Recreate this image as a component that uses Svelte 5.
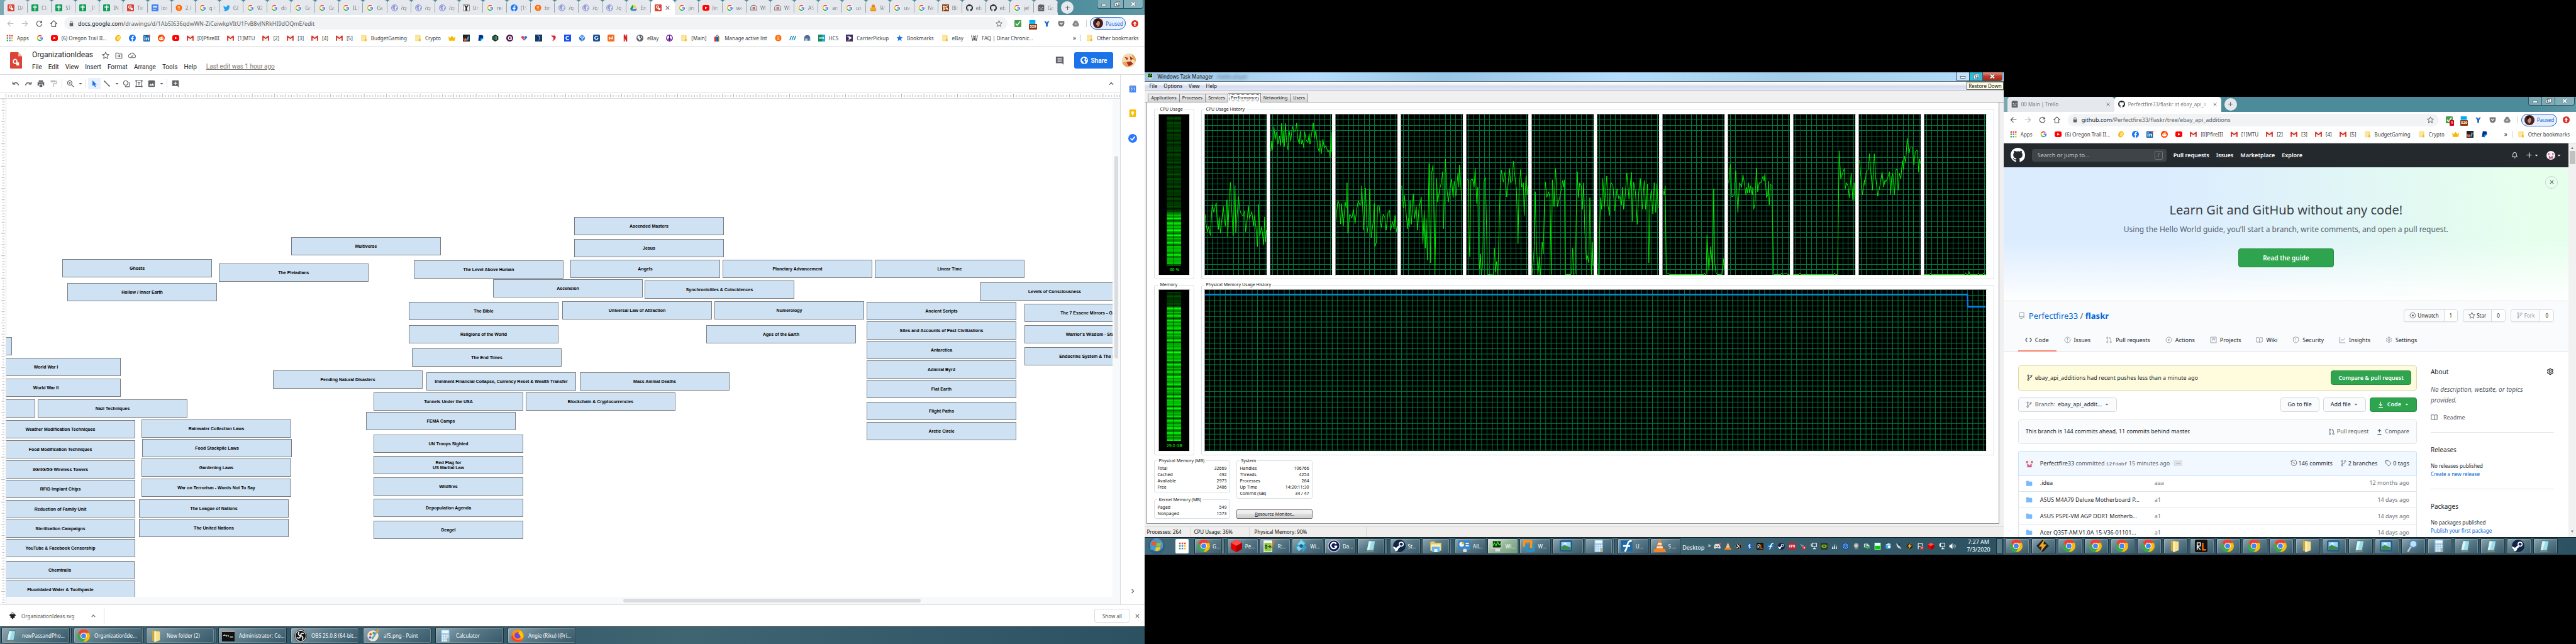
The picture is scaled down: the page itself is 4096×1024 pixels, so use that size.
<script>
  const C = (f, d) => `<path fill="${f}" d="${d}"/>`;
  const S = (s, d, w = 1.4) => `<path fill="none" stroke="${s}" stroke-width="${w}" stroke-linejoin="round" d="${d}"/>`;
  const O = (f, r = 8, x = 8, y = 8) => `<circle fill="${f}" cx="${x}" cy="${y}" r="${r}"/>`;
  const R = (f, x, y, w, h, r = 0) => `<rect fill="${f}" x="${x}" y="${y}" width="${w}" height="${h}" rx="${r}"/>`;
  const g = '#5f6368';
  const cat = 'M8 0C3.58 0 0 3.58 0 8c0 3.54 2.29 6.53 5.47 7.59.4.07.55-.17.55-.38 0-.19-.01-.82-.01-1.49-2.01.37-2.53-.49-2.69-.94-.09-.23-.48-.94-.82-1.13-.28-.15-.68-.52-.01-.53.63-.01 1.08.58 1.23.82.72 1.21 1.87.87 2.33.66.07-.52.28-.87.51-1.07-1.78-.2-3.64-.89-3.64-3.95 0-.87.31-1.59.82-2.15-.08-.2-.36-1.02.08-2.12 0 0 .67-.21 2.2.82.64-.18 1.32-.27 2-.27.68 0 1.36.09 2 .27 1.53-1.04 2.2-.82 2.2-.82.44 1.1.16 1.92.08 2.12.51.56.82 1.27.82 2.15 0 3.07-1.87 3.75-3.65 3.95.29.25.54.73.54 1.48 0 1.07-.01 1.93-.01 2.2 0 .21.15.46.55.38A8.013 8.013 0 0016 8c0-4.42-3.58-8-8-8z';
  const star = 'M8 1l2.1 4.8 5 .5-3.8 3.4 1.1 5.1L8 12.1l-4.4 2.7 1.1-5.1L.9 6.3l5-.5z';
  const branch = (c) => S(c, 'M4.5 5v6M4.5 11c0-3 7-1.500 7-5.500', 1.3) + `<g fill="none" stroke="${c}" stroke-width="1.3"><circle cx="4.500" cy="3.200" r="1.700"/><circle cx="4.500" cy="12.800" r="1.700"/><circle cx="11.500" cy="3.800" r="1.700"/></g>`;
  const pull = (c) => S(c, 'M4 5v6M12 11V6c0-1.500-1-2.500-3-2.500M10.500 1.500l-2 2 2 2', 1.3) + `<g fill="none" stroke="${c}" stroke-width="1.3"><circle cx="4" cy="3.200" r="1.700"/><circle cx="4" cy="12.800" r="1.700"/><circle cx="12" cy="12.800" r="1.700"/></g>`;
  const book = (c) => S(c, 'M8 4v10M1.200 2.500h4.500C7 2.500 8 3.200 8 4.200c0-1 1-1.700 2.300-1.700h4.500v10.500h-4.300C9 13 8 13.500 8 14.300c0-.8-1-1.300-2.500-1.300H1.200z');
  const gear = (c) => S(c, 'M6.800 1.200h2.400l.4 2 1.400.8 1.900-.7 1.200 2-1.500 1.400v1.600l1.500 1.400-1.200 2-1.900-.7-1.400.8-.4 2H6.800l-.4-2-1.400-.8-1.900.7-1.200-2 1.500-1.400V6.700L1.900 5.300l1.200-2 1.900.7 1.400-.8z') + `<circle cx="8" cy="7.500" r="2.200" fill="none" stroke="${c}" stroke-width="1.400"/>`;
  const gmail = R('#eee', 0, 2, 16, 12, 1) + S('#d93025', 'M1.500 14V3.500L8 9l6.500-5.500V14', 2.6);
  const steam = O('#10254a') + O('#fff', 3.2, 10.5, 5.8) + O('#10254a', 1.9, 10.5, 5.8) + C('#fff', 'M0 8.500l4 1.800 3.500-3 2 1.800-3 2.600a2.300 2.300 0 1 1-4.500.4L.4 10.700z');
  const notepad = C('#5a7f96', 'M5 1h9l-2.500 13.500H2z') + C('#9adfe6', 'M5.200 2h7.800l-2.200 11.300H3z') + C('#d8f4f4', 'M5.200 2H9L5.500 13.300H3z') + C('#a08a50', 'M2 14.500h9.500l.3 1H3z');
  const calc = R('#7db6dd', 2.5, 0, 11, 16, 1) + R('#eaf5fc', 3.5, 1, 9, 4) + [0, 1, 2, 3].map((r) => [0, 1, 2, 3].map((c) => R(c == 3 && r > 1 ? '#e8a33a' : '#fff', 3.7 + c * 2.3, 6.3 + r * 2.4, 1.7, 1.6)).join('')).join('');
  const chrome = O('#fbbc05') + C('#ea4335', 'M1.070 4A8 8 0 0 1 14.930 4L8 4.500 4.800 9.500z') + C('#34a853', 'M1.070 4A8 8 0 0 0 7.500 16L11.500 9.800 8 11.500 4.500 10z') + O('#fff', 4) + O('#4285f4', 3.1);
  const folderBig = C('#c9a73f', 'M3 1l6 1v14l-6-2z') + C('#f7e08a', 'M6 2l7 .5v11L6 16z') + C('#fdf3bd', 'M6 2l2 .1v13L6 16z');
  const picture = R('#1f5a8c', 0, 1, 16, 14, 2) + R('#9bd0f5', 2, 3, 12, 10) + C('#3f8a4b', 'M2 13V9l4-2 8 3v3z') + C('#fff', 'M4 6l3-2 3 2z');
  const vlc = C('#f58220', 'M1 12h14l1 4H0z') + C('#f58220', 'M7 0h2l4 13H3z') + C('#eee', 'M6 4h4l.8 2.500H5.200zM4.600 8.500h6.800l.7 2.300H3.900z');
  const blue = '#4285f4';
  const icons = {
    google: O('#fff') + `<g fill="none" stroke-width="2.600"><path stroke="#ea4335" d="M3.200 4.800A5.600 5.600 0 0 1 12 4"/><path stroke="#fbbc05" d="M3.200 11.200A5.600 5.600 0 0 1 3.200 4.700"/><path stroke="#34a853" d="M12 12A5.600 5.600 0 0 1 3.100 11"/><path stroke="#4285f4" d="M8 8h5.600a5.600 5.600 0 0 1-1.700 4.100"/></g>`,
    draw: R('#db4437', 0, 0, 16, 16, 2) + `<circle cx="6.500" cy="6" r="2.800" fill="none" stroke="#fff" stroke-width="1.800"/>` + R('#fff', 8.5, 8.5, 4.5, 4.5),
    sheet: R('#0f9d58', 0, 0, 16, 16, 2) + R('#fff', 7, 2, 2.2, 12) + R('#fff', 3, 5, 10, 2.2),
    doc: R(blue, 0, 0, 16, 16, 2) + R('#fff', 3, 4, 10, 1.6) + R('#fff', 3, 7.2, 10, 1.6) + R('#fff', 3, 10.400, 7, 1.6),
    badge: C('#f60', 'M8 0l1.800 1.800L12 .8l.9 2.300 2.300.9-.8 2.200L16 8l-1.600 1.800.8 2.200-2.300.9-.9 2.300-2.200-1L8 16l-1.800-1.800-2.200 1-.9-2.300L.8 12l.8-2.200L0 8l1.600-1.800L.8 4l2.300-.9L4 .8l2.200 1z') + R('#fff', 5, 5, 6, 1.3) + R('#fff', 5, 7.4, 5, 1.3) + R('#fff', 5, 9.8, 6, 1.3),
    twitter: C('#1da1f2', 'M16 3.500l-1.700.6A3.300 3.300 0 0 0 8 6.200C5 6.200 2.700 4.700 1 2.800c-.9 1.600-.3 3.500 1 4.400L.6 6.900c0 1.600 1.100 2.900 2.600 3.200H1.800c.4 1.300 1.600 2.200 3 2.300C3.500 13.500 1.800 14 .2 13.800c5 3.200 14 1 14.100-8.400z'),
    globe: O('#e8eaf6') + `<g fill="none" stroke="#5c6bc0" stroke-width="1.300"><circle cx="8" cy="8" r="7"/></g>` + C('#8f99cf', 'M4 3l4-1 2 3-3 3 2 2-1 4-3-3-2-4zM11 8l3 0-1 4z'),
    globeDark: O('#5f6368') + C('#fff', 'M4 2l4 1-1 3 3 3-2 5-3-4-3-3zM10 3l3 2v3l-2-1z'),
    crest: R('#fff', 0, 0, 16, 16, 1) + S('#333', 'M1 1h14v14H1z', 1) + C('#222', 'M3 2h3l2 3 2-3h3l-3.500 6 1 6h-5l1-6z'),
    facebook: O('#1877f2') + C('#fff', 'M9 16v-6h2l.4-2.500H9V6c0-.8.400-1.300 1.500-1.300h1V2.500C8.500 2 6.700 3.200 6.700 5.500v2H4.500V10h2.200v6z'),
    drive: C('#0f9d58', 'M5.300 1L0 10.200 2.700 15 8 5.700z') + C('#ffcd40', 'M5.300 1h5.400L16 10.200h-5.400z') + C(blue, 'M2.700 15l2.700-4.800H16L13.300 15z'),
    youtube: R('#f00', 0, 1.5, 16, 13, 3.5) + C('#fff', 'M6 5l5.500 3L6 11z'),
    camera: `<g fill="none" stroke="#777" stroke-width="1.500"><path d="M1 13V8a7 6 0 0 1 14 0v5z"/></g>` + O('#d33', 3, 8, 8.5) + O('#fff', 1.2, 8, 8.5),
    person: O('#d98a1c', 4, 8, 4.5) + C('#f2a72c', 'M1 8c4-2 10-2 14 0v6H1z') + R('#e09520', 2, 13, 12, 3),
    photo: R('#7a3b1d', 0, 0, 16, 16) + C('#f7e3bd', 'M1 2l7 2 6-3-2 6 3 7-6-3-7 4 1-7z') + C('#b62c10', 'M5 5l4 2-2 6zM11 2l3 5-4 1z'),
    face2: R('#f3d9b0', 0, 0, 16, 16) + C('#b62c10', 'M3 4l4 1-1 3zM9 3l4 3-3 2zM5 10l5-1 3 3-5 3z') + C('#e2a860', 'M0 10l5 0 3 6H0zM11 0l5 4v5l-3-2z'),
    github: C('#24292e', cat), githubWhite: C('#fff', cat),
    sad: C(g, 'M1 2l4-2 10 1v15H1z') + R('#e8eaed', 4, 6, 2, 2) + R('#e8eaed', 10, 6, 2, 2) + S('#e8eaed', 'M4.500 12.500c1.500-3 5.500-3 7 0', 1.4),
    coin: `<ellipse cx="8" cy="8" rx="6" ry="7.500" transform="rotate(30 8 8)" fill="#f5b50f"/><ellipse cx="9" cy="7" rx="3.500" ry="5.500" transform="rotate(30 8 8)" fill="#ffe066"/>`,
    linkedin: R('#0a66a8', 0, 1, 15, 15, 1) + R('#fff', 2.5, 6.5, 2.2, 7) + O('#fff', 1.3, 3.6, 4.2) + C('#fff', 'M6.500 6.500h2v1c1-1.600 4.500-1.700 4.500 2v4h-2.200V10c0-2-2-2-2 0v3.500H6.500z') + O('#f44', 2.4, 13.6, 2.4),
    reddit: O('#ff4500') + `<ellipse cx="8" cy="9.500" rx="5" ry="3.600" fill="#fff"/>` + O('#ff4500', 1, 6, 9) + O('#ff4500', 1, 10, 9) + S('#fff', 'M8 6l1-3 2.500.6', 0.9),
    gmail,
    folder: C('#f9d76b', 'M2 1h9l3 1v13H2z') + C('#fbe7a0', 'M3 2h8v12H3z') + C('#e8bb3e', 'M10 10h4v5h-4z'),
    crown: C('#fbb800', 'M0 4l4 4 4-6 4 6 4-4-1.500 10h-13z'),
    wd: R('#222', 0, 0, 16, 16) + C('#f63', 'M1 8l2 0 1 4 1-4h2l1 4 1-4v6H2z') + C('#3ab0e8', 'M12 2l2 4-2 8-3-2z'),
    paypal: C('#003087', 'M4 1h6c3 0 4 2 3.500 4.500C13 8.500 11 9.500 8 9.500L7 14H2z') + C('#009cde', 'M6 15l1-5.500h2c3 0 4.500-1.500 5-4 1 4-1 6-4.500 6L9 15z'),
    hex: C('#222', 'M8 0l7 4v8l-7 4-7-4V4z') + R('#3a6', 4, 4, 2, 8) + R('#3a6', 7, 3, 2, 10) + R('#3a6', 10, 4, 2, 8),
    a: O('#4b164c') + `<circle cx="8" cy="8" r="3.200" fill="none" stroke="#fff" stroke-width="2"/>` + R('#fff', 10.5, 5, 2, 8),
    heart: C('#e03a52', 'M8 14L1 7c0-4 5-5 7-1z') + C('#3f6fd8', 'M8 14l7-7c0-4-5-5-7-1z') + C('#fff', 'M6 8h4v1H6z'),
    moon: R('#173a62', 0, 0, 16, 16) + C('#6fb6e8', 'M5 1c8 1 9 10 1 14 5-4 5-10-1-14z'),
    swoosh: C('#d7262e', 'M3 2h9c5 5 0 11-6 13 3-4 4-7 2-8z'),
    c: R('#1652f0', 0, 0, 16, 16) + S('#fff', 'M11 5.500A3.800 3.800 0 1 0 11 10.500', 2.2),
    dia: C('#5ba7f0', 'M8 0l6 4-6 4-6-4z') + C('#1c5cc8', 'M1 5l6 4v7l-5-5z') + C('#2f7fe0', 'M15 5L9 9v7l5-5z'),
    gblue: R('#1a4f9c', 0, 0, 16, 16, 3) + S('#fff', 'M11 5.500A3.800 3.800 0 1 0 11.500 8.500H8.500', 2),
    norange: R('#f36d21', 0, 0, 16, 16, 3) + S('#fff', 'M4 12V7l7 3V4', 2.200),
    netflix: C('#d81f26', 'M4 0h3l2.500 7V0H12v16H9.500L6.500 8v8H4z'),
    peace: `<g fill="none" stroke="#5b0a91" stroke-width="1.800"><circle cx="8" cy="8" r="7"/><path d="M8 1v14M8 8l-5 5M8 8l5 5"/></g>`,
    bag: R('#f5af02', 3, 5, 10, 11) + R('#e53238', 1, 5, 5, 11) + R('#0064d2', 6, 5, 5, 11) + S('#333', 'M5 5c0-5 6-5 6 0', 1.3),
    slashes: S('#0a84c8', 'M1 13L5 3M6 13l4-10M11 13l4-10', 2),
    kraken: C('#4c6f99', 'M1 14V8a7 7 0 0 1 14 0v6h-2V9h-1v5h-2V9H9v5H7V9H6v5H4V9H3v5z'),
    hcs: R('#0b8a63', 0, 0, 16, 16) + R('#26a6d8', 9, 0, 7, 16) + R('#fff', 3, 6, 10, 4) + R('#0b8a63', 4, 7, 8, 2),
    usps: R('#333366', 0, 0, 16, 16) + C('#fff', 'M2 4h7l5 4-9 5 3-5z') + C('#c33', 'M2 13h8l-1 1.500H2z'),
    starBlue: C('#1a73e8', star),
    w: S('#333', 'M1 2l3 12 4-10 4 10 3-12M5 2l4 12M11 2l-3 8', 1.400),
    apps: ['#ea4335', '#ea4335', '#ea4335', '#34a853', '#4285f4', '#fbbc05', '#34a853', '#4285f4', '#fbbc05'].map((c, i) => R(c, 1 + (i % 3) * 5.4, 1 + Math.floor(i / 3) * 5.4, 3.4, 3.4)).join(''),
    back: S(g, 'M15 8H2M8 2L2 8l6 6', 1.8), backOff: S('#babcbe', 'M15 8H2M8 2L2 8l6 6', 1.8), fwd: S('#babcbe', 'M1 8h13M8 2l6 6-6 6', 1.8),
    reload: S(g, 'M13 4.500A6.200 6.200 0 1 0 14.200 9', 1.8) + C(g, 'M14.500 1v6h-6z'),
    home: S(g, 'M3.500 15V8H1l7-6.800L15 8h-2.500v7z', 1.8),
    lock: R(g, 3, 7, 10, 8, 1) + S(g, 'M5 7V4.500a3 3 0 0 1 6 0V7', 1.6),
    starLine: S(g, star, 1.4),
    check: R('#43a047', 0, 0, 16, 16, 2) + S('#fff', 'M3 8l3.500 4L13 3', 2.2),
    window: R('#03a9f4', 1, 0, 14, 12) + R('#b3e5fc', 1, 6, 14, 1),
    fork: C('#1565c0', 'M2 2l4 1 2 3 2-3 4-1-4 7v6H6V9z'),
    pocket: C('#777', 'M1 2h14v6a7 7 0 0 1-14 0z') + S('#fff', 'M4.500 6L8 9.500 11.500 6', 1.8),
    driveGrey: C('#888', 'M5.300 1h5.400L16 10.200 13.300 15H2.700L0 10.200z') + C('#ccc', 'M8 5.700l2.700 4.500H5.300z'),
    face: O('#4a2020') + C('#c48f78', 'M5 4h5l1 5-3 5-3-4z') + C('#2a1010', 'M3 3c3-3 8-2 9 3L8 4 5 8z'),
    update: O('#d93025') + C('#fff', 'M8 3l4 5H9.500v5h-3V8H4z'),
    docLogo: C('#db4437', 'M2.500 0h8l4 4v11c0 .6-.4 1-1 1h-11c-.6 0-1-.4-1-1V1c0-.6.400-1 1-1z') + C('#f3b7b1', 'M10.500 0l4 4h-4z') + `<circle cx="7" cy="9" r="2" fill="none" stroke="#fff" stroke-width="1.200"/>` + R('#fff', 8.3, 10, 3, 3),
    move: S(g, 'M1.500 3h5l1.500 2h6.500v9h-13zM5 9.500h5M8 7l2.500 2.500L8 12', 1.5),
    cloud: S(g, 'M4 13a3.500 3.500 0 0 1-.3-7A4.800 4.800 0 0 1 12.800 7 3 3 0 0 1 12.500 13zM5.500 9l2 2 3-3.500', 1.4),
    undo: S(g, 'M2 4v5h5M2.500 9C6 4.500 12 5 14 11.500', 2), redo: S(g, 'M14 4v5H9M13.500 9C10 4.500 4 5 2 11.500', 2),
    print: R(g, 3.500, 1, 9, 3) + C(g, 'M1 5h14v7h-3V9H4v3H1z') + R(g, 5, 10, 6, 5),
    paint: R('#bdbdbd', 2, 1, 10, 4) + S('#bdbdbd', 'M12 3h2.500v5H8v7', 1.8),
    zoom: `<circle cx="6.500" cy="6.500" r="4.700" fill="none" stroke="${g}" stroke-width="1.600"/>` + S(g, 'M10 10l5 5M4.500 6.500h4M6.500 4.500v4', 1.5),
    caret: C(g, 'M3 6h10l-5 5z'), caretW: C('#fff', 'M3 6h10l-5 5z'),
    cursor: C('#1a73e8', 'M4 1l9 9H9.200l2 4.500-2 .9-2-4.600L4 13z'),
    line: S(g, 'M3 3l10 10', 2) + O(g, 1.500, 3, 3) + O(g, 1.500, 13, 13),
    shape: `<circle cx="6.500" cy="6.500" r="4.500" fill="none" stroke="${g}" stroke-width="1.500"/>` + S(g, 'M12.500 6H14v8.500H6V13', 1.5),
    textbox: S(g, 'M2 2h12v12H2zM5 5.500h6M8 5.500V12', 1.5) + R(g, 0.5, 0.5, 3, 3) + R(g, 12.500, 0.5, 3, 3) + R(g, 0.5, 12.500, 3, 3) + R(g, 12.500, 12.500, 3, 3),
    image: R(g, 1, 1, 14, 14, 2) + C('#fff', 'M3 12l3-4 2 2.500L10.500 7l3 5z'),
    addComment: C(g, 'M1 1h14v15l-3-3H1z') + S('#fff', 'M8 3.500v7M4.500 7h7', 1.6),
    comment: C(g, 'M1 1h14v15l-3-3H1z') + R('#fff', 4, 4, 8, 1.2) + R('#fff', 4, 6.400, 8, 1.2) + R('#fff', 4, 8.800, 8, 1.2),
    up: S(g, 'M3 11l5-6 5 6', 2), right: S(g, 'M5.500 3l5 5-5 5', 2), x: S(g, 'M3 3l10 10M13 3L3 13', 1.8),
    calendar: R('#4285f4', 1, 2, 14, 14, 1) + R('#c3c3c3', 2, 0, 12, 3) + S('#fff', 'M4 6.500h3L5.500 8.500c2.500 0 2 3.500-1.500 3M10 7l1.500-.7V12.500', 1),
    keep: R('#fbbc04', 1, 0, 14, 16, 2) + O('#fff', 3, 8, 7) + R('#fff', 6.500, 10, 3, 2.500),
    tasks: O('#2979ff') + S('#fff', 'M4 8l3 3 5-6', 2),
    ink: C('#222', 'M8 0l7 7-3 3 1 2-3 1-2 3-2-3-3-1 1-2-3-3z') + C('#ddd', 'M8 1l3 3-2 1-1-1-2 1-1-1z'),
    notepad, chrome, folderBig, calc, steam, picture, vlc,
    cmd: R('#111', 0, 1, 16, 14) + R('#bbb', 0, 1, 16, 2) + S('#fff', 'M2 8c1-2 2-1 2 0M6 7v2M8 7v2M10 9.500h4', 1),
    obs: O('#111') + `<circle cx="8" cy="8" r="7" fill="none" stroke="#ddd" stroke-width="1"/>` + S('#eee', 'M6 3c-2 3 0 5 2 5s4 2 2 5M12 5c-3-1-4 1-4 3s-2 4-5 2', 1.5),
    palette: O('#f2e6cf', 7) + O('#e44', 1.500, 5, 6) + O('#4a4', 1.500, 9, 4.500) + O('#36c', 1.500, 4.500, 10) + S('#4aa3df', 'M14 1L7 12', 2) + S('#e8a33a', 'M15 0l-2.500 4', 2.2),
    firefox: O('#ff9500') + C('#ff3b30', 'M1 5c1 9 10 11 14 5-2 8-13 7-15 0z') + O('#7542e5', 4, 8, 7.500) + C('#ffcb00', 'M11 1c5 4 5 9 1 12 1-4-1-6-3-8z'),
    orb: `<circle cx="8" cy="8" r="8" fill="#2b5f86"/><circle cx="8" cy="7" r="6.500" fill="#5b93b8"/>` + C('#f0562b', 'M3.500 4.500c1.500-1 3-.8 4.200 0L7 8c-1.200-.8-2.500-.9-4.200 0z') + C('#8cc63e', 'M8.400 4.800c1.500.8 3 .6 4.200-.2L11.800 8c-1.400.9-2.800.9-4.200.2z') + C('#39a2e6', 'M2.600 8.800c1.500-1 3-.8 4.200 0l-.9 3.400c-1.200-.8-2.500-.9-4.200 0z') + C('#fdc916', 'M7.500 9c1.500.8 3 .6 4.200-.2l-.9 3.400c-1.400.9-2.800.9-4.200.2z'),
    redbox: C('#e60000', 'M8 0l7 4v8l-7 4-7-4V4z') + C('#ff4d4d', 'M8 0l7 4-7 4-7-4z') + C('#a80000', 'M8 8l7-4v8l-7 4z'),
    greenpad: R('#f5f5f5', 1, 1, 11, 15) + R('#8bd13f', 2, 4, 9, 11) + S('#222', 'M3 12V7h2v5M6 9h4M8.500 7.500L10 9l-1.500 1.500', 1) + S('#c97a2b', 'M15 0l-4 11', 1.8),
    swirl: C('#2aa7d8', 'M8 0l6 4-3 1 4 5-5 6-1-4-7 1 0-7 3 1z') + C('#7fd7f2', 'M8 0l-5 6 3 1-4 3 3 5 5-5-2-1 5-4z') + O('#2c5f7a', 2.300),
    gring: O('#ccd') + O('#0e1d52', 6.8) + S('#fff', 'M11 5.500A3.800 3.800 0 1 0 11.500 8.500H8.500', 1.800),
    explorer: C('#e8c767', 'M1 3l5-1 1 2h8v10H1z') + C('#fdf0b8', 'M2 6h12v8H2z') + R('#6bb5e8', 3, 9, 10, 7, 1) + R('#e7f5fd', 6, 12, 4, 4),
    panel: R('#3b87c8', 0, 1, 16, 12, 1) + O('#fff', 3, 5, 6) + C('#f5a623', 'M5 6V3a3 3 0 0 1 3 3z') + R('#fff', 10, 4, 4, 1.500) + R('#fff', 10, 7, 4, 1.500) + O('#ddd', 2.500, 9, 14),
    taskman: R('#ccc', 1, 1, 13, 11, 1) + R('#103010', 3, 2, 10, 8) + S('#2f2', 'M3 8l2-4 2 4 2-5 2 4 2-2', 1) + R('#ddd', 6, 12, 6, 3),
    vm: S('#f7931e', 'M2 9V2h9v9', 3) + S('#2394d2', 'M5 6v8h9V5', 3),
    f: R('#1e6aa8', 0, 1, 15, 14) + S('#fff', 'M14 2c-7-2-5 11-9 13M3 8h9', 2.200),
    bolt: C('#222', 'M8 0l8 8-8 8-8-8z') + C('#f5a623', 'M10 0L3 9h4l-2 7 8-10H9z'),
    rl: R('#111', 0, 0, 16, 16, 2) + S('#ddd', 'M3 13V4h4v4H3l4 5', 1.4) + S('#f60', 'M10 4v9h4', 2),
    lens: `<circle cx="9" cy="5.500" r="4.700" fill="#bfe0f7" stroke="#4a88bd" stroke-width="1.500"/>` + S('#c9c9c9', 'M6 9L2 15.500', 2.2),
    discord: C('#ddd', 'M2 4c3-2 9-2 12 0l2 8-3 2-2-2H5l-2 2-3-2z') + O('#2c5566', 1.500, 5.5, 8.500) + O('#2c5566', 1.500, 10.5, 8.500) + O('#f44', 2.500, 14, 2.5),
    bt: C('#0a5bd0', 'M8 0c6 0 6 16 0 16S2 0 8 0z') + S('#fff', 'M5 5l6 5.500L8 13V3l3 2.500L5 11', 1.2),
    apm: R('#c3202e', 0, 0, 16, 16, 1) + S('#fff', 'M2 11V6l2-1v6M6.500 11V5.500H9V8H6.500M11 11V5.500h3V11', 1.2),
    usbx: C('#888', 'M1 2l9 4 3 6-6-1z') + O('#e03131', 4, 11.500, 11.500) + S('#fff', 'M10 10l3 3M13 10l-3 3', 1.3),
    net: S('#fff', 'M3 2v5c0 1 1 1 2 1M5 1h10v8H5zM10 9v4M7 14h7', 1.500),
    nvidia: R('#333', 0, 0, 16, 16, 1) + `<ellipse cx="8" cy="8" rx="6" ry="4" fill="#76b900"/>` + O('#333', 2) ,
    sails: C('#fff', 'M7 1l2 13H6zM11 4l2 10h-3zM4 6l1 8H1z'),
    rings: O('#0d47a1') + `<g fill="none" stroke="#8fd3ff" stroke-width="1.300"><circle cx="8" cy="8" r="5.500"/><circle cx="8" cy="8" r="2.500"/></g>`,
    webcam: O('#aaa', 5.500, 8, 6.500) + O('#ddd', 2.500, 8, 6.500) + R('#888', 4, 13, 8, 2),
    play: S('#fff', 'M2 3h8v7H2zM5 6h8v7', 1.4) + C('#1dbf3a', 'M8 6l7 5-7 5z'),
    meter: R('#dfe', 1, 0, 14, 16) + R('#0c0', 2, 7, 12, 8),
    db: C('#4aa3e0', 'M2 4l8-3 4 3v9l-8 2-4-3z') + C('#bfe3fa', 'M2 4l8-3 4 3-8 2z') + O('#fff', 3, 10, 9),
    dish: C('#ddd', 'M2 1c0 8 4 12 12 13L10 9z') + S('#222', 'M6 6l6-4', 1.4),
    flagx: S('#fff', 'M3 1v14M3 2c4-2 6 2 10 0v7c-4 2-6-2-10 0', 1.5) + O('#e03131', 3.800, 11.500, 12) + S('#fff', 'M10 10.500l3 3M13 10.500l-3 3', 1.2),
    sound: C('#fff', 'M1 5h3l4-4v14l-4-4H1z') + S('#fff', 'M10 5c2 2 2 4 0 6M12.500 3c3 3 3 7 0 10', 1.2),
    bell: S('#fff', 'M2 12c2-1.500 2-3 2-6a4 4 0 0 1 8 0c0 3 0 4.500 2 6zM6.500 14.500h3', 1.4),
    plus: S('#fff', 'M8 2v12M2 8h12', 1.6), plusG: S(g, 'M8 2v12M2 8h12', 2),
    identicon: O('#f2f2f2') + R('#c9588c', 3, 4, 2.500, 3.500) + R('#c9588c', 10.500, 4, 2.500, 3.500) + C('#c9588c', 'M4.500 9h2v2h3V9h2v5h-7z'),
    repo: S('#959da5', 'M3 13V2.500C3 1.800 3.500 1.500 4 1.500h9.300v12.200H10M3 12c0-1 .5-1.300 1.200-1.300h9M5.500 13v2.800L7.200 14.500 9 15.800V13', 1.4),
    eye: S(g, 'M8 1.800c4.500 0 6.500 4.500 6.500 6.200S12.500 14.200 8 14.200 1.500 9.700 1.500 8 3.500 1.800 8 1.800z', 1.400) + O(g, 2.200),
    branchG: branch('#959da5'), branchD: branch('#24292e'), branchM: branch('#6a737d'),
    code: S('#24292e', 'M5 3.500L1 8l4 4.500M11 3.500L15 8l-4 4.500', 1.6),
    issue: S('#959da5', 'M8 1.500a6.500 6.500 0 1 1 0 13 6.500 6.500 0 0 1 0-13zM8 4v5M8 10.500v1.500', 1.4),
    pullG: pull('#959da5'), pullD: pull('#586069'),
    action: S('#959da5', 'M8 1.500a6.500 6.500 0 1 1 0 13 6.500 6.500 0 0 1 0-13z') + C('#959da5', 'M6.500 5l4.500 3-4.500 3z'),
    project: S('#959da5', 'M1.500 1.500h13v13h-13zM5 4v7M8 4v3M11 4v5', 1.4),
    bookG: book('#959da5'), bookD: book('#586069'),
    shield: S('#959da5', 'M8 1l6 2v5c0 3.500-2.500 6-6 7-3.500-1-6-3.500-6-7V3zM8 4.500v4M8 10.500V12', 1.4),
    graph: S('#959da5', 'M1.500 1v13.500H15M4 10.500l3-4 2.500 2.500L14 4', 1.4),
    gearG: gear('#959da5'), gearD: gear('#24292e'),
    download: S('#fff', 'M8 1v9M4.500 7L8 10.500 11.500 7M3 14h10', 1.5),
    diff: S('#586069', 'M8 1.500v8M4 5.500h8M3.500 14h9', 1.5),
    history: S('#586069', 'M2 4.500A6.500 6.500 0 1 1 1.500 8M1.500 2v3.500H5M8 4.500v4l2.500 1.500', 1.4),
    tag: S('#586069', 'M2 2h6l6.500 6.500-5.500 6L2 8z') + O('#586069', 1, 5, 5),
    dir: C('#79b8ff', 'M1 3c0-.6.400-1 1-1h4l1.500 2H14c.6 0 1 .4 1 1v8c0 .6-.4 1-1 1H2c-.6 0-1-.4-1-1z'),
    shareGlobe: O('#fff') + C('#1a73e8', 'M6 2l4 2-2 4 3 3-3 4-3-5-3-2zM11 3l3 3-1 3z')
  };

  const tabsBefore = [['draw', 'DA'], ['sheet', 'CU'], ['sheet', 'STO'], ['sheet', '_IN'], ['sheet', 'INT'], ['draw', 'Tim'], ['doc', 'Jos'], ['badge', '2.8'], ['google', 'q t'], ['twitter', 'GE'], ['google', '92'], ['google', 'dis'], ['google', 'Go'], ['google', 'Go'], ['google', 'ILL'], ['google', 'Ge'], ['globe', '/qr'], ['globe', '/qr'], ['globe', '/qr'], ['crest', 'Un'], ['google', 'rec'], ['facebook', '(19'], ['badge', 'tim'], ['globe', '/qr'], ['globe', '/qr'], ['globe', '/qr'], ['drive', 'En']];
  const tabsAfter = [['google', 'jim'], ['youtube', 'Jin'], ['google', 'we'], ['camera', 'WI'], ['camera', 'WI'], ['google', 'AS'], ['google', 'an'], ['google', 'us'], ['person', '9/1'], ['google', 'uw'], ['google', 'No'], ['photo', 'Blo'], ['github', 'eb'], ['github', 'eb'], ['google', 'jef'], ['sad', 'Go']];

  const marksShared = [['apps', 'Apps'], ['google'], ['youtube', '(6) Oregon Trail II...'], ['coin'], ['facebook'], ['linkedin'], ['reddit'], ['youtube'], ['gmail', '[0]PfireIII'], ['gmail', '[1]MTU'], ['gmail', '[2]'], ['gmail', '[3]'], ['gmail', '[4]'], ['gmail', '[5]'], ['folder', 'BudgetGaming'], ['folder', 'Crypto'], ['crown'], ['wd'], ['paypal']];
  const marksWide = [...marksShared, ['hex'], ['a'], ['heart'], ['moon'], ['swoosh'], ['c'], ['dia'], ['gblue'], ['norange'], ['netflix'], ['globeDark', 'eBay'], ['peace'], ['folder', '[Main]'], ['bag', 'Manage active list'], ['badge'], ['slashes'], ['kraken'], ['hcs', 'HCS'], ['usps', 'CarrierPickup'], ['starBlue', 'Bookmarks'], ['folder', 'eBay'], ['w', 'FAQ | Dinar Chronic...']];

  const menus = ['File', 'Edit', 'View', 'Insert', 'Format', 'Arrange', 'Tools', 'Help'];
  const tools = ['undo', 'redo', 'print', 'paint', '|', 'zoom', 'caret', '|', 'cursor', 'line', 'caret', 'shape', 'textbox', 'image', 'caret', '|', 'addComment'];

  // Diagram boxes: left, top, label
  const nodes = [
    [903, 188, 'Ascended Masters'], [903, 223, 'Jesus'], [453, 220, 'Multiverse'], [89, 255, 'Ghosts'], [338, 262, 'The Pleiadians'],
    [97, 293, 'Hollow / Inner Earth'], [648, 257, 'The Level Above Human'], [897, 256, 'Angels'], [1139, 256, 'Planetary Advancement'], [1381, 256, 'Linear Time'],
    [774, 287, 'Ascension'], [1015, 289, 'Synchronicities & Coincidences'], [1548, 292, 'Levels of Consciousness'],
    [640, 323, 'The Bible'], [884, 322, 'Universal Law of Attraction'], [1126, 322, 'Numerology'], [1368, 323, 'Ancient Scripts'], [1619, 326, 'The 7 Essene Mirrors - Gregg Braden'],
    [640, 360, 'Religions of the World'], [1113, 360, 'Ages of the Earth'], [1368, 354, 'Sites and Accounts of Past Civilizations'], [1619, 360, "Warrior's Wisdom - Stuart Wilde"],
    [645, 397, 'The End Times'], [1368, 385, 'Antarctica'], [1368, 416, 'Admiral Byrd'], [1619, 395, 'Endocrine System & The Human Body'],
    [424, 432, 'Pending Natural Disasters'], [668, 435, 'Imminent Financial Collapse, Currency Reset & Wealth Transfer'], [912, 435, 'Mass Animal Deaths'], [1368, 447, 'Flat Earth'],
    [584, 467, 'Tunnels Under the USA'], [826, 467, 'Blockchain & Cryptocurrencies'], [1368, 482, 'Flight Paths'], [572, 498, 'FEMA Camps'], [1368, 514, 'Arctic Circle'],
    [584, 534, 'UN Troops Sighted'], [584, 568, 'Red Flag for\nUS Martial Law'], [584, 602, 'Wildfires'], [584, 636, 'Depopulation Agenda'], [584, 671, 'Deagel'],
    [-229, 379, ''], [-56, 412, 'World War I'], [-56, 445, 'World War II'], [-192, 478, ''], [50, 478, 'Nazi Techniques'],
    [-33, 511, 'Weather Modification Techniques'], [-33, 543, 'Food Modification Techniques'], [-33, 575, '3G/4G/5G Wireless Towers'], [-33, 606, 'RFID Implant Chips'], [-33, 638, 'Reduction of Family Unit'], [-33, 669, 'Sterilization Campaigns'], [-33, 700, 'YouTube & Facebook Censorship'], [-34, 735, 'Chemtrails'], [-33, 766, 'Fluoridated Water & Toothpaste'],
    [215, 510, 'Rainwater Collection Laws'], [216, 541, 'Food Stockpile Laws'], [215, 572, 'Gardening Laws'], [215, 604, 'War on Terrorism - Words Not To Say'], [211, 637, 'The League of Nations'], [211, 668, 'The United Nations']
  ];

  // Per-core load traces, "x,y" pairs on a 230 x 1082 field
  const cores = [
    '0,670 4,740 9,790 14,755 20,815 24,690 27,605 33,660 38,620 42,595 46,735 50,775 53,690 58,800 64,690 68,618 72,690 76,750 82,575 85,825 90,600 95,457 99,610 105,815 112,478 115,795 119,700 125,553 130,640 135,670 143,685 147,650 152,790 158,700 162,615 166,700 175,655 181,750 185,680 190,755 196,890 200,605 205,815 212,755 219,878 223,690 226,860 229,780',
    '2,245 5,180 8,240 13,80 18,170 22,120 28,200 34,145 38,210 42,60 46,190 48,110 52,215 56,60 60,170 66,240 70,110 76,180 82,80 88,115 95,110 98,58 102,160 108,200 112,110 116,200 120,170 125,225 128,115 133,170 140,190 145,130 148,200 154,130 160,55 165,160 170,105 176,215 182,250 185,175 190,265 196,165 201,225 207,210 215,255 219,240 223,290 227,120 229,250',
    '0,718 4,640 8,580 13,605 18,738 21,600 28,750 35,590 39,630 42,460 45,800 52,670 60,700 66,640 72,735 78,640 84,580 90,610 94,605 97,480 104,780 111,495 117,795 123,720 127,500 132,830 140,720 144,600 146,890 152,860 156,620 162,615 170,760 177,670 183,690 188,780 195,660 201,645 205,780 212,720 218,770 221,680 226,790 229,750',
    '2,480 8,630 12,545 18,660 24,770 27,700 30,755 33,580 38,740 45,535 50,700 56,620 61,780 66,640 75,555 81,870 86,650 90,900 93,700 98,980 104,330 110,1000 113,400 119,340 126,1080 132,430 136,590 144,500 150,460 155,385 158,770 165,300 170,490 176,590 182,500 188,435 194,560 198,450 204,550 212,395 215,490 218,340 222,460 226,580',
    '2,440 6,440 10,880 12,960 16,440 22,435 28,490 32,360 38,600 42,490 44,920 48,1040 52,940 55,1080 60,1010 65,450 70,425 74,720 78,1078 100,1080 104,900 108,1060 112,990 117,1080 122,720 125,500 130,375 137,455 143,390 150,555 156,450 160,365 164,460 170,450 175,315 182,450 186,500 192,870 196,500 202,370 206,490 212,460 215,680 222,410 226,540 229,480',
    '0,1080 6,960 10,840 12,520 16,850 22,1080 28,960 32,1080 38,860 42,940 47,550 50,455 55,560 62,520 67,560 72,1078 76,440 82,620 88,365 95,620 103,560 110,500 114,445 118,490 121,440 124,1078 145,1078 148,1060 152,900 155,1078 162,1070 165,700 169,385 173,560 178,460 184,480 188,640 193,460 197,780 203,980 207,950 212,1000 216,560 220,850 222,1078 225,860 228,1020',
    '0,1078 4,1078 8,800 12,560 16,640 20,430 26,620 35,415 38,600 42,640 45,680 47,500 52,460 58,480 65,650 73,500 80,570 84,550 90,610 94,490 98,640 103,560 110,395 118,570 127,390 130,720 135,455 142,520 149,740 154,530 160,430 167,640 175,445 180,640 187,470 192,1000 196,600 201,510 207,670 212,460 218,660 222,465 227,630',
    '0,510 5,540 9,480 13,1060 15,1078 22,1068 25,1078 152,1078 155,1068 158,1078 162,1078 165,810 172,1050 179,890 186,1050 190,500 194,1000 198,1060 203,1078 220,1078 226,970 229,1040',
    '2,460 8,335 14,555 22,545 28,380 36,660 42,460 50,490 55,405 60,460 66,540 69,490 72,530 75,460 80,530 84,480 90,540 92,490 95,640 100,600 105,360 110,520 116,460 122,460 130,415 134,450 137,400 143,560 148,540 150,450 153,610 158,470 163,480 168,950 170,1078 196,1078 199,1068 202,1078 218,1068 221,1078 229,1078',
    '0,1078 20,1078 23,1068 26,1078 150,1078 153,1068 156,1078 164,1078 167,650 170,245 176,435 182,400 189,365 193,500 197,460 203,480 208,560 215,395 221,575 226,460 229,580',
    '2,305 6,400 13,540 20,440 22,480 26,400 30,380 35,370 39,265 44,390 50,510 57,265 62,420 70,550 78,480 86,385 92,490 97,440 100,455 108,420 114,385 118,540 122,420 126,395 132,540 138,370 142,370 146,510 150,395 156,435 162,310 166,370 169,280 174,320 180,160 187,260 190,230 198,215 205,340 210,250 218,240 223,390 226,300 229,330',
    '0,1078 20,1078 23,1068 26,1078 151,1078 154,1066 157,1078 163,1078 166,1055 169,1078 198,1078 201,1068 204,1078 218,1078 220,1068 223,1078 229,1078'
  ];
  const range = (start, step, end) => Array.from({ length: Math.floor((end - start) / step) + 1 }, (_, i) => start + i * step);
  const coreGrid = range(8, 19.6, 230).map((x) => `M${x} 0V1082`).join('') + range(38, 36, 1082).map((y) => `M0 ${y}H230`).join('');
  const memGrid = range(10, 12, 1755).map((x) => `M${x} 0V361`).join('') + range(12, 12, 361).map((y) => `M0 ${y}H1755`).join('');
  const bars = range(5, 3, 338);

  const stats = {
    physical: [['Total', '32669'], ['Cached', '492'], ['Available', '2973'], ['Free', '2486']],
    kernel: [['Paged', '549'], ['Nonpaged', '1573']],
    system: [['Handles', '106766'], ['Threads', '4254'], ['Processes', '264'], ['Up Time', '14:20:11:30'], ['Commit (GB)', '34 / 47']]
  };

  const leftTasks = [['notepad', 'newPassandPho...'], ['chrome', 'OrganizationIde...'], ['folderBig', 'New folder (2)'], ['cmd', 'Administrator: Co...'], ['obs', 'OBS 25.0.8 (64-bit...'], ['palette', 'af5.png - Paint'], ['calc', 'Calculator'], ['firefox', 'Angie (Riku) (@ri...']];
  const midTasks = [['chrome', 'G...', 1], ['redbox', 'Pe...'], ['greenpad', 'R:...'], ['swirl', 'Wi...'], ['gring', 'Da...'], ['notepad', '', 1], ['steam', 'St...'], ['explorer', '', 1], ['panel', 'All...'], ['taskman', 'Wi...', 2], ['vm', 'W...'], ['picture', ''], ['calc', '', 1], ['f', 'U...'], ['vlc', 'S ...']];
  const tray = ['discord', 'vlc', 'obs', 'bt', 'rl', 'f', 'steam', 'apm', 'usbx', 'net', 'nvidia', 'sails', 'rings', 'webcam', 'play', 'meter', 'db', 'dish', 'bolt', 'flagx', 'redbox', 'net', 'sound'];
  const rightTasks = ['chrome', 'bolt', 'chrome', 'chrome', 'chrome', 'chrome', 'folderBig', 'rl', 'chrome', 'chrome', 'chrome', 'folderBig', 'picture', 'notepad', 'picture', 'lens', 'calc', 'notepad', 'notepad', 'steam', 'notepad'];

  const repoNav = [['code', 'Code'], ['issue', 'Issues'], ['pullG', 'Pull requests'], ['action', 'Actions'], ['project', 'Projects'], ['bookG', 'Wiki'], ['shield', 'Security'], ['graph', 'Insights'], ['gearG', 'Settings']];
  const files = [['.idea', 'aaa', '12 months ago'], ['ASUS M4A79 Deluxe Motherboard P...', 'a1', '14 days ago'], ['ASUS P5PE-VM AGP DDR1 Motherb...', 'a1', '14 days ago'], ['Acer Q35T-AM.V1.0A 15-V36-01101...', 'a1', '14 days ago']];
</script>

{#snippet icon(name, size = 's11')}
  <svg class="icon {size}" viewBox="0 0 16 16" aria-hidden="true">{@html icons[name]}</svg>
{/snippet}

{#snippet controls()}
  <div class="controls">
    <button aria-label="Minimize"><svg viewBox="0 0 16 12"><rect x="3" y="6" width="10" height="4" fill="#fff" stroke="#455" /></svg></button>
    <button class="max" aria-label="Restore Down"><svg viewBox="0 0 16 12"><path d="M6 1h8v8H6zM3 3h8v8H3z" fill="#fff" stroke="#455" /><path d="M6 6h2v2H6z" fill="#455" /></svg></button>
    <button class="close" aria-label="Close"><svg viewBox="0 0 16 12"><path d="M4 2l8 8M12 2l-8 8" stroke="#455" stroke-width="4" /><path d="M4 2l8 8M12 2l-8 8" stroke="#fff" stroke-width="2.400" /></svg></button>
  </div>
{/snippet}

{#snippet tab(name, title)}
  <button class="tab" role="tab">{@render icon(name)}<span class="title">{title}</span><i></i></button>
{/snippet}

{#snippet chromeBars(host, path, backIcon, marks, badge)}
  <div class="toolbar">
    <button aria-label="Back">{@render icon(backIcon)}</button>
    <button aria-label="Forward">{@render icon('fwd')}</button>
    <button aria-label="Reload">{@render icon('reload')}</button>
    <button aria-label="Home">{@render icon('home')}</button>
    <div class="omnibox">{@render icon('lock', 's9')}<span class="url"><b>{host}</b>{path}</span>{@render icon('starLine')}</div>
    <div class="exts">
      <span class="ext">{@render icon('check')}{#if badge}<em class="red">1</em>{/if}</span>
      <span class="ext">{@render icon('window')}<em>529</em></span>
      {@render icon('fork')}{@render icon('pocket')}{@render icon('driveGrey')}
    </div>
    <i class="vr"></i>
    <button class="paused">{@render icon('face', 's16')}Paused</button>
    {@render icon('update')}
  </div>
  <nav class="marks" aria-label="Bookmarks">
    <div class="list">
      {#each marks as [name, label]}
        <a href="#bookmark" aria-label={label ?? name}>{@render icon(name)}{#if label}<span>{label}</span>{/if}</a>
      {/each}
    </div>
    <span class="more">»</span>
    <i class="vr"></i>
    <a href="#other">{@render icon('folder')}<span>Other bookmarks</span></a>
  </nav>
{/snippet}

{#snippet gauge(from, label)}
  <div class="gauge">
    <svg viewBox="0 0 70 342" preserveAspectRatio="none" aria-hidden="true">
      {#each bars as y}
        <path d="M18 {y}h16v2h-16zM35 {y}h16v2h-16z" fill={y >= from ? '#00ff00' : '#004d00'} />
      {/each}
    </svg>
    <span>{label}</span>
  </div>
{/snippet}

{#snippet statTable(title, rows)}
  <fieldset class="stats">
    <legend>{title}</legend>
    <table><tbody>{#each rows as [k, v]}<tr><th scope="row">{k}</th><td>{v}</td></tr>{/each}</tbody></table>
  </fieldset>
{/snippet}

<div class="desk">
  <section class="monitor one">
    <div class="strip">
      <div class="tabs many" role="tablist">
        {#each tabsBefore as [n, t]}{@render tab(n, t)}{/each}
        <button class="tab active" role="tab" aria-label="OrganizationIdeas">{@render icon('draw')}{@render icon('x', 's9')}</button>
        {#each tabsAfter as [n, t]}{@render tab(n, t)}{/each}
      </div>
      <button class="new" aria-label="New tab">{@render icon('plusG', 's9')}</button>
      {@render controls()}
    </div>
    {@render chromeBars('docs.google.com', '/drawings/d/1Ab5I636qdwWN-ZiCeiwkpVItU1FvB8vJNRkHI9dOQmE/edit', 'backOff', marksWide, false)}

    <header class="docs">
      <svg class="logo" viewBox="1.500 0 13 16" preserveAspectRatio="none" aria-hidden="true">{@html icons.docLogo}</svg>
      <div class="names">
        <div class="name"><h1>OrganizationIdeas</h1>{@render icon('starLine', 's12')}{@render icon('move', 's12')}{@render icon('cloud', 's12')}</div>
        <nav class="menu">{#each menus as m}<button>{m}</button>{/each}<a href="#history">Last edit was 1 hour ago</a></nav>
      </div>
      <button aria-label="Comments">{@render icon('comment', 's14')}</button>
      <button class="share">{@render icon('shareGlobe', 's12')}Share</button>
      <span class="avatar">{@render icon('face2', 's22')}</span>
    </header>

    <div class="workspace">
      <div class="editor">
        <div class="tools">
          {#each tools as t}
            {#if t === '|'}<i></i>{:else}<button class:thin={t === 'caret'} class:on={t === 'cursor'} aria-label={t}>{@render icon(t, t === 'caret' ? 's8' : 's12')}</button>{/if}
          {/each}
          <button class="fold" aria-label="Hide the menus">{@render icon('up', 's10')}</button>
        </div>
        <svg class="ruler" aria-hidden="true">
          <defs><pattern id="rh" width="35.600" height="10" patternUnits="userSpaceOnUse"><path d="M.500 2v6M18.300 2.500v5M4.900 4v3M9.400 4v3M13.800 4v3M22.700 4v3M27.200 4v3M31.600 4v3" stroke="#b0b3b7" /></pattern></defs>
          <rect width="100%" height="10" fill="url(#rh)" />
        </svg>
        <div class="sheet">
          <svg class="vruler" aria-hidden="true">
            <defs><pattern id="rv" width="9" height="35.600" patternUnits="userSpaceOnUse"><path d="M2 .500h6M2.500 18.300h5M4 4.900h3M4 9.400h3M4 13.800h3M4 22.700h3M4 27.200h3M4 31.600h3" stroke="#b0b3b7" /></pattern></defs>
            <rect width="9" height="100%" fill="url(#rv)" />
          </svg>
          <div class="canvas">
            {#each nodes as [x, y, label]}
              <div class="node" style="left:{x}px;top:{y}px">{label}</div>
            {/each}
          </div>
          <div class="vscroll"><i></i></div>
          <div class="hscroll"><i></i></div>
        </div>
      </div>
      <aside class="side">
        {@render icon('calendar', 's12')}{@render icon('keep', 's12')}{@render icon('tasks', 's14')}
        <button aria-label="Hide side panel">{@render icon('right', 's10')}</button>
      </aside>
    </div>

    <div class="shelf">
      <button class="file">{@render icon('ink', 's12')}<span>OrganizationIdeas.svg</span>{@render icon('up', 's9')}</button>
      <button class="all">Show all</button>
      <button aria-label="Close downloads">{@render icon('x', 's9')}</button>
    </div>
    <div class="taskbar wide">
      {#each leftTasks as [n, t]}<button class="task">{@render icon(n, 's20')}<span>{t}</span></button>{/each}
    </div>
  </section>

  <section class="monitor two">
    <div class="window">
      <div class="titlebar">{@render icon('taskman', 's11')}<span>Windows Task Manager</span><small>media player</small>{@render controls()}</div>
      <nav class="winmenu"><button>File</button><button>Options</button><button>View</button><button>Help</button><span class="tip">Restore Down</span></nav>
      <div class="wintabs" role="tablist">
        {#each ['Applications', 'Processes', 'Services', 'Performance', 'Networking', 'Users'] as t}
          <button role="tab" aria-selected={t === 'Performance'}><span>{t}</span></button>
        {/each}
      </div>
      <div class="panel">
        <div class="row">
          <fieldset class="meter"><legend>CPU Usage</legend>{@render gauge(221, '36 %')}</fieldset>
          <fieldset class="history">
            <legend>CPU Usage History</legend>
            <div class="plots">
              {#each cores as points}
                <svg viewBox="0 0 230 1082" preserveAspectRatio="none" aria-hidden="true">
                  <path class="grid" d={coreGrid} />
                  <polyline class="load" {points} />
                </svg>
              {/each}
            </div>
          </fieldset>
        </div>
        <div class="row">
          <fieldset class="meter"><legend>Memory</legend>{@render gauge(38, '29.0 GB')}</fieldset>
          <fieldset class="history">
            <legend>Physical Memory Usage History</legend>
            <div class="plots">
              <svg viewBox="0 0 1755 361" preserveAspectRatio="none" aria-hidden="true">
                <path class="grid" d={memGrid} />
                <path class="mem" d="M0 10H1714L1715 38H1755" />
              </svg>
            </div>
          </fieldset>
        </div>
        <div class="foot">
          <div class="col">{@render statTable('Physical Memory (MB)', stats.physical)}{@render statTable('Kernel Memory (MB)', stats.kernel)}</div>
          <div class="col">{@render statTable('System', stats.system)}<button class="monitorbtn"><u>R</u>esource Monitor...</button></div>
        </div>
      </div>
      <div class="status"><span>Processes: 264</span><span>CPU Usage: 36%</span><span>Physical Memory: 90%</span></div>
      <div class="taskbar mid">
        <button class="start" aria-label="Start">{@render icon('orb', 's26')}</button>
        <button class="launch" aria-label="Apps">{@render icon('apps', 's12')}</button>
        {#each midTasks as [n, t, kind]}<button class="task" class:stack={kind === 1} class:live={kind === 2} aria-label={t || n}>{@render icon(n, 's20')}<span>{t}</span></button>{/each}
        <span class="desktop">Desktop <sup>»</sup></span>
        <div class="tray">{#each tray as n}{@render icon(n, 's11')}{/each}</div>
        <time>7:27 AM<br />7/3/2020</time>
        <button class="peek" aria-label="Show desktop"></button>
      </div>
    </div>
  </section>

  <section class="monitor three">
    <div class="window">
      <div class="strip">
        <div class="tabs" role="tablist">
          <button class="tab big" role="tab">{@render icon('sad')}<span class="title">00 Main | Trello</span>{@render icon('x', 's8')}</button>
          <button class="tab big active" role="tab">{@render icon('github')}<span class="title">Perfectfire33/flaskr at ebay_api_a</span>{@render icon('x', 's8')}</button>
        </div>
        <button class="new" aria-label="New tab">{@render icon('plusG', 's9')}</button>
        {@render controls()}
      </div>
      {@render chromeBars('github.com', '/Perfectfire33/flaskr/tree/ebay_api_additions', 'back', marksShared, true)}
      <div class="viewport">
        <div class="gh">
          <header class="ghhead">
            {@render icon('githubWhite', 's23')}
            <label class="search"><input aria-label="Search" placeholder="Search or jump to..." /><kbd>/</kbd></label>
            <a href="#pulls">Pull requests</a><a href="#issues">Issues</a><a href="#market">Marketplace</a><a href="#explore">Explore</a>
            <span class="right">{@render icon('bell')}<span class="pair">{@render icon('plus')}{@render icon('caretW', 's8')}</span><span class="pair">{@render icon('identicon', 's14')}{@render icon('caretW', 's8')}</span></span>
          </header>
          <section class="banner">
            <button class="dismiss" aria-label="Dismiss">{@render icon('x', 's9')}</button>
            <h2>Learn Git and GitHub without any code!</h2>
            <p>Using the Hello World guide, you’ll start a branch, write comments, and open a pull request.</p>
            <button class="green lg">Read the guide</button>
          </section>
          <div class="repo">
            <div class="repotop">
              {@render icon('repo')}<h3><a href="#owner">Perfectfire33</a> / <a href="#repo"><b>flaskr</b></a></h3>
              <div class="counts">
                <div class="count"><button>{@render icon('eye')}Unwatch</button><a href="#w">1</a></div>
                <div class="count"><button>{@render icon('starLine')}Star</button><a href="#s">0</a></div>
                <div class="count off"><button>{@render icon('branchG')}Fork</button><a href="#f">0</a></div>
              </div>
            </div>
            <nav class="reponav">{#each repoNav as [n, t]}<a href="#{t}" class:sel={t === 'Code'}>{@render icon(n)}{t}</a>{/each}</nav>
          </div>
          <div class="content">
            <main>
              <div class="flash">{@render icon('branchD')}<span><b>ebay_api_additions</b> had recent pushes less than a minute ago</span><button class="green">Compare &amp; pull request</button></div>
              <div class="actions">
                <button class="plain">{@render icon('branchM')}<span>Branch:</span> ebay_api_addit...{@render icon('caret', 's8')}</button>
                <div class="grow"></div>
                <button class="plain">Go to file</button>
                <button class="plain">Add file{@render icon('caret', 's8')}</button>
                <button class="green">{@render icon('download')}Code{@render icon('caretW', 's8')}</button>
              </div>
              <div class="ahead"><span>This branch is 144 commits ahead, 11 commits behind master.</span><a href="#pr">{@render icon('pullD')}Pull request</a><a href="#cmp">{@render icon('diff')}Compare</a></div>
              <div class="files">
                <div class="commit">{@render icon('identicon', 's16')}<span><b>Perfectfire33</b> committed <code>12fdabf</code> 15 minutes ago</span><button class="dots" aria-label="More">…</button>
                  <div class="grow"></div>
                  <a href="#commits">{@render icon('history')}146 commits</a><a href="#branches">{@render icon('branchM')}2 branches</a><a href="#tags">{@render icon('tag')}0 tags</a>
                </div>
                <table><tbody>
                  {#each files as [name, msg, age]}<tr><td class="ic">{@render icon('dir')}</td><td class="fn">{name}</td><td>{msg}</td><td class="age">{age}</td></tr>{/each}
                </tbody></table>
              </div>
            </main>
            <aside class="about">
              <h4>About {@render icon('gearD', 's12')}</h4>
              <p class="desc">No description, website, or topics provided.</p>
              <a class="readme" href="#readme">{@render icon('bookD')}Readme</a>
              <h4 class="ruled">Releases</h4>
              <p>No releases published</p><a href="#release">Create a new release</a>
              <h4 class="ruled">Packages</h4>
              <p>No packages published</p><a href="#package">Publish your first package</a>
            </aside>
          </div>
        </div>
        <div class="bar"><b>▲</b><i></i><b class="dn">▼</b></div>
      </div>
      <div class="taskbar small">{#each rightTasks as n}<button class="task" aria-label={n}>{@render icon(n, 's20')}</button>{/each}</div>
    </div>
  </section>
</div>

<style>
  :global(body) { background: #000; }
  .desk { display: grid; grid-template-columns: 4fr 3fr 2fr; height: 100vh; overflow: hidden; background: #000; font: 8px/11px 'Noto Sans', sans-serif; color: #3c4043; }
  .desk :global(*) { box-sizing: border-box; }
  button { font: inherit; color: inherit; background: none; border: 0; padding: 0; margin: 0; display: flex; align-items: center; justify-content: center; white-space: nowrap; }
  a { color: inherit; text-decoration: none; white-space: nowrap; }
  h1, h2, h3, h4, p { margin: 0; font-weight: 400; }
  .icon { display: block; flex: none; width: 11px; height: 11px; }
  .s8 { width: 8px; height: 8px; } .s9 { width: 9px; height: 9px; } .s10 { width: 10px; height: 10px; } .s12 { width: 12px; height: 12px; }
  .s14 { width: 14px; height: 14px; } .s16 { width: 16px; height: 16px; } .s20 { width: 20px; height: 20px; }
  .s22 { width: 22px; height: 22px; } .s23 { width: 23px; height: 23px; } .s26 { width: 26px; height: 26px; }

  .monitor { min-width: 0; min-height: 0; display: grid; }
  .one { display: flex; flex-direction: column; background: #fff; }
  .two { grid-template-rows: 4fr 27fr 5fr; }
  .three { grid-template-rows: 27fr 128fr 25fr; }
  .window { grid-row: 2; display: flex; flex-direction: column; min-height: 0; min-width: 0; overflow: hidden; }

  .strip { flex: none; height: 24px; display: flex; align-items: center; padding-left: 6px; background: linear-gradient(90deg, #7ba9b4, #4b8b9a 8%, #4b8b9a 92%, #5d98a6); }
  .tabs { display: flex; align-self: stretch; min-width: 0; }
  .many { flex: 1; }
  .tab { flex: 1 1 0; min-width: 0; justify-content: flex-start; gap: 5px; padding-left: 6px; background: #e5e9ed; border-radius: 5px 5px 0 0; color: #777b80; }
  .tab .title { flex: 1; min-width: 0; overflow: hidden; text-align: left; mask-image: linear-gradient(90deg, #000 50%, transparent); }
  .tab i { width: 1px; height: 15px; background: #9aa3a8; flex: none; }
  .tab.active { background: #fff; }
  .tab.big { flex: none; width: 170px; padding-right: 6px; }
  .tab.big .title { mask-image: linear-gradient(90deg, #000 90%, transparent); }
  .new { flex: none; width: 20px; height: 20px; margin-left: 5px; border-radius: 10px; background: #e5e9ed; }
  .controls { display: flex; align-self: flex-start; flex: none; height: 14px; border: 1px solid #2f5763; border-top: 0; border-radius: 0 0 4px 4px; background: #ffffff40; margin: 0 2px 0 auto; }
  .controls button { width: 21px; border-right: 1px solid #2f5763; }
  .controls .close { width: 30px; border: 0; }
  .controls svg { width: 12px; height: 9px; }
  .many ~ .controls { margin-left: 37px; }

  .toolbar { flex: none; height: 26px; display: flex; align-items: center; padding: 0 10px; background: #fff; }
  .toolbar > button:not(.paused) { width: 12px; margin-right: 11px; }
  .omnibox { flex: 1; min-width: 0; height: 20px; display: flex; align-items: center; gap: 6px; padding: 0 8px 0 7px; border-radius: 10px; background: #f1f3f4; color: #5f6368; }
  .url { flex: 1; font-size: 9px; }
  .url b { font-weight: 400; color: #202124; }
  .exts { display: flex; gap: 12px; padding: 0 11px; align-items: center; }
  .ext { display: grid; position: relative; }
  .ext em { position: absolute; top: 6px; left: 0; height: 9px; font: 700 6px/9px 'Noto Sans', sans-serif; color: #fff; background: #8b3a0e; border-radius: 1px; padding: 0 1px; }
  .ext em.red { left: 6px; background: #d0021b; padding: 0 2px; }
  .vr { width: 1px; height: 11px; background: #ccc; }
  .paused { height: 20px; width: 57px; margin: 0 9px 0 5px; gap: 4px; border: 1px solid #1a5fc8; border-radius: 10px; background: #e8f0fe; color: #1967d2; }
  .marks { flex: none; height: 24px; display: flex; align-items: center; padding: 0 10px 3px; background: #fff; border-bottom: 1px solid #dadce0; }
  .marks .list { flex: 1; min-width: 0; display: flex; gap: 12px; overflow: hidden; }
  .marks a { display: flex; align-items: center; gap: 6px; height: 14px; }
  .more { padding: 0 7px; font-size: 10px; }
  .marks .vr { margin-right: 8px; }

  .docs { flex: none; height: 45px; display: flex; align-items: center; padding: 0 14px 0 16px; border-bottom: 1px solid #dadce0; font-family: Roboto, sans-serif; }
  .logo { width: 19px; height: 26px; }
  .names { flex: 1; margin-left: 16px; }
  .name { display: flex; gap: 9px; align-items: center; height: 22px; }
  h1 { font-size: 12px; color: #202124; margin-right: 5px; }
  .menu { display: flex; gap: 10px; font-size: 10px; line-height: 14px; color: #202124; height: 17px; }
  .menu a { margin-left: 5px; color: #777; text-decoration: underline; }
  .share { width: 62px; height: 26px; margin: 0 14px 0 16px; gap: 4px; border-radius: 3px; background: #1a73e8; color: #fff; font-weight: 700; font-size: 10px; }
  .avatar { border-radius: 11px; overflow: hidden; }

  .workspace { flex: 1; min-height: 0; display: flex; }
  .editor { flex: 1; min-width: 0; display: flex; flex-direction: column; }
  .tools { flex: none; height: 28px; display: flex; align-items: center; padding: 0 9px 0 15px; border-bottom: 1px solid #dadce0; }
  .tools button { width: 20px; height: 18px; }
  .tools .thin { width: 11px; }
  .tools .on { background: #e8f0fe; border-radius: 2px; }
  .tools i { width: 1px; height: 14px; margin: 0 3px; background: #dadce0; }
  .tools .fold { margin-left: auto; width: 10px; }
  .ruler { flex: none; width: 100%; height: 10px; border-bottom: 1px solid #dadce0; padding-left: 9px; }
  .sheet { flex: 1; min-height: 0; display: grid; grid-template: 1fr 12px / 10px 1fr 12px; }
  .vruler { width: 10px; height: 100%; border-right: 1px solid #dadce0; grid-row: 1 / 3; }
  .canvas { position: relative; overflow: hidden; background: #fff; }
  .node { position: absolute; width: 238px; height: 29px; display: grid; place-content: center; text-align: center; white-space: pre; background: #cfe2f3; border: 1px solid #777c82; font: 700 7px/8px 'Liberation Sans', sans-serif; color: #000; }
  .vscroll { background: #f8f9fa; grid-row: 1 / 3; grid-column: 3; display: flex; padding: 91px 3px 0; }
  .vscroll i { width: 6px; height: 322px; border-radius: 3px; background: #dadce0; }
  .hscroll { background: #f8f9fa; display: grid; grid-template-columns: 981fr 473fr 305fr; padding: 3px 0; }
  .hscroll i { grid-column: 2; border-radius: 3px; background: #dadce0; }
  .side { flex: none; width: 39px; border-left: 1px solid #dadce0; display: flex; flex-direction: column; align-items: center; gap: 27px; padding: 16px 0; }
  .side button { margin-top: auto; }

  .shelf { flex: none; height: 35px; display: flex; align-items: center; justify-content: flex-end; gap: 8px; padding: 0 7px 0 14px; border-top: 1px solid #dadce0; color: #555; }
  .shelf .file { margin-right: auto; gap: 8px; height: 26px; padding-right: 12px; border-right: 1px solid #dadce0; }
  .shelf .file span { margin-right: 18px; }
  .all { width: 56px; height: 22px; border: 1px solid #dadce0; border-radius: 3px; }

  .taskbar { flex: none; height: 28px; display: flex; align-items: center; padding: 1px 2px; border-top: 1px solid #0d1c22; background: linear-gradient(90deg, #44697a, #2f5564 30%, #3f6573 60%, #2c5262); color: #fff; }
  .task { height: 25px; padding: 0 5px; justify-content: flex-start; gap: 7px; border: 1px solid #1c2f38; border-radius: 2px; background: linear-gradient(150deg, #8fa7b1, #5a7a88 45%, #37596a); box-shadow: inset 0 0 0 1px #ffffff40; overflow: hidden; }
  .wide { gap: 6px; }
  .wide .task { width: 109px; }
  .wide .task:nth-child(-n + 3) { box-shadow: inset 0 0 0 1px #ffffff40, 3px 0 0 -1px #5a7a88, 4px 0 0 -1px #1c2f38; }
  .mid .task { width: 50px; margin-right: 2px; gap: 4px; padding: 0 4px; }
  .mid .stack { width: 44px; margin-right: 8px; box-shadow: inset 0 0 0 1px #ffffff40, 4px 0 0 -1px #5a7a88, 5px 0 0 -1px #1c2f38; }
  .mid .stack:has(span:empty), .mid .task:has(span:empty) { padding-left: 11px; }
  .mid .live { background: linear-gradient(150deg, #d7e6d9, #93b59a 50%, #6c9a77); }
  .start { width: 34px; } .launch { width: 21px; height: 23px; margin: 0 9px 0 13px; background: #fff; border-radius: 2px; }
  .desktop { margin-left: auto; font-size: 9px; padding-right: 5px; white-space: nowrap; }
  .desktop sup { font-size: 9px; vertical-align: 4px; margin-left: 3px; }
  .tray { display: flex; gap: 6px; }
  time { width: 48px; margin: 0 4px 0 12px; text-align: center; font-size: 9px; line-height: 12px; }
  .peek { width: 10px; height: 25px; border: 1px solid #1c2f38; background: #5a7a88; }
  .small { gap: 3px; }
  .small .task { width: 39px; padding: 0 7px; }

  .titlebar { flex: none; height: 16px; display: flex; align-items: center; gap: 6px; padding-left: 3px; color: #111; background: linear-gradient(100deg, #9cc4e2, #b5dcfc 20%, #97c6e6 35%, #b5dcfc 55%, #a2cdea 75%, #b5dcfc); border-top: 1px solid #000; border-bottom: 1px solid #5d6b78; }
  .titlebar small { font-size: 8px; color: #4f6f8a; filter: blur(2px); }
  .titlebar .close { background: linear-gradient(#e09a8a, #c0392b 50%, #a52a18); }
  .titlebar .max { background: #35b9dc; }
  .winmenu { flex: none; height: 14px; display: flex; align-items: center; gap: 10px; padding-left: 7px; color: #111; background: linear-gradient(#fff, #e9edf7 45%, #d4daec 50%, #e2e7f5); border-bottom: 1px solid #b5bad0; }
  .tip { margin-left: auto; align-self: stretch; display: flex; align-items: center; padding: 0 2px; background: #ffffe1; border: 1px solid #555; }
  .wintabs { flex: none; height: 19px; display: flex; align-items: flex-end; padding-left: 5px; background: #f0f0f0; color: #111; font-size: 7px; border-bottom: 1px solid #8b8e96; }
  .wintabs button { height: 13px; padding: 0 4px; border: 1px solid #8b8e96; border-width: 1px 1px 0 0; background: linear-gradient(#f3f3f3, #e3e3e3 50%, #d3d3d3); }
  .wintabs button:first-child { border-left-width: 1px; }
  .wintabs [aria-selected='true'] { height: 15px; padding: 0 2px; background: #fff; margin-bottom: -1px; }
  .wintabs [aria-selected='true'] span { border: 1px dotted #444; padding: 0 1px; line-height: 9px; }
  .panel { flex: 1; min-height: 0; display: flex; flex-direction: column; gap: 5px; margin: 0 7px 4px 3px; padding: 7px 7px 7px 11px; background: #fff; border: 1px solid #8b8e96; border-top: 0; box-shadow: 0 0 0 8px #f0f0f0; clip-path: inset(0 -8px -5px -4px); color: #111; font-size: 7px; }
  .row { flex: 1 1 0; min-height: 0; display: flex; gap: 11px; }
  fieldset { min-width: 0; min-height: 0; margin: 0; border: 1px solid #d5dfe5; border-radius: 3px; display: flex; }
  legend { font-size: 7px; line-height: 8px; padding: 0 2px; margin-left: 0; }
  .meter { flex: none; width: 64px; padding: 3px 6px 5px 6px; }
  .history { flex: 1; padding: 3px 11px 5px 4px; }
  .gauge { flex: 1; min-height: 0; display: flex; flex-direction: column; background: #000; border: 1px solid #999; border-right-color: #eee; border-bottom-color: #eee; color: #0f0; text-align: center; }
  .gauge svg { flex: 1 1 0; min-height: 0; width: 100%; }
  .gauge span { height: 14px; line-height: 11px; }
  .plots { flex: 1; min-width: 0; display: flex; gap: 4px; }
  .plots svg { flex: 1 1 0; width: 0; min-width: 0; background: #000; border: 1px solid #888; border-right-color: #eee; border-bottom-color: #eee; }
  .grid, .load, .mem { fill: none; vector-effect: non-scaling-stroke; stroke-width: 1px; }
  .grid { stroke: #007a3d; shape-rendering: crispEdges; }
  .load { stroke: #00f000; }
  .mem { stroke: #0080ff; stroke-width: 2px; }
  .foot { flex: none; display: flex; gap: 10px; }
  .col { width: 121px; display: flex; flex-direction: column; gap: 8px; }
  .stats { padding: 3px 5px 2px 4px; }
  .stats table { flex: 1; border-collapse: collapse; line-height: 10px; }
  .stats th { font-weight: 400; text-align: left; padding: 0; }
  .stats td { text-align: right; padding: 0; }
  .monitorbtn { height: 15px; margin-top: auto; border: 1px solid #707070; border-radius: 2px; background: linear-gradient(#f2f2f2, #ebebeb 50%, #ddd 50%, #cfcfcf); }
  .status { flex: none; height: 17px; display: flex; background: #f0eeec; border-top: 1px solid #8b8e96; color: #111; line-height: 15px; }
  .status span { padding: 0 4px 0 3px; width: 74px; border-right: 1px solid #d5d5d5; }
  .status span:nth-child(2) { width: 93px; padding-left: 4px; } .status span:nth-child(3) { width: 186px; padding-left: 7px; }

  .viewport { flex: 1; min-height: 0; display: flex; background: #fff; }
  .gh { flex: 1; min-width: 0; overflow: hidden; font-size: 9px; line-height: 14px; color: #24292e; }
  .bar { flex: none; width: 12px; background: #f1f1f1; display: flex; flex-direction: column; align-items: center; color: #777; }
  .bar b { font-size: 6px; font-weight: 400; height: 12px; line-height: 14px; }
  .bar i { width: 9px; height: 21px; background: #c1c1c1; }
  .bar .dn { margin-top: auto; height: 16px; }
  .ghhead { height: 38px; display: flex; align-items: center; gap: 11px; padding: 0 11px; background: #24292e; color: #fff; font-weight: 600; }
  .search { width: 214px; height: 20px; display: flex; align-items: center; padding: 0 6px 0 9px; border-radius: 4px; background: #3f4448; }
  .search input { flex: 1; min-width: 0; border: 0; padding: 0; background: none; font: 9px 'Noto Sans', sans-serif; color: #fff; }
  .search input::placeholder { color: #c4c7c9; opacity: 1; }
  kbd { width: 13px; height: 14px; border: 1px solid #6a6f73; border-radius: 2px; font: 8px/12px 'Noto Sans', sans-serif; text-align: center; color: #999; }
  .right { margin-left: auto; display: flex; gap: 12px; align-items: center; }
  .pair { display: flex; align-items: center; gap: 2px; }
  .banner { position: relative; height: 213px; padding-top: 55px; display: flex; flex-direction: column; align-items: center; border-bottom: 1px solid #e1e4e8; background: linear-gradient(#fff0 55%, #fff), linear-gradient(80deg, #dbecff 30%, #e6ffed 92%); }
  h2 { font-size: 20px; line-height: 26px; color: #3a4046; }
  .banner p { margin: 9px 0 21px; font-size: 12px; line-height: 18px; color: #586069; }
  .dismiss { position: absolute; top: 14px; right: 17px; width: 20px; height: 20px; border: 1px solid #c5d5d5; border-radius: 10px; }
  .green { height: 23px; padding: 0 11px; gap: 5px; border: 1px solid #28903f; border-radius: 4px; background: #2ea44f; color: #fff; font-weight: 600; }
  .green.lg { height: 30px; width: 152px; font-size: 10px; }
  .repo { height: 80px; background: #fafbfc; border-bottom: 1px solid #e1e4e8; padding: 12px 23px 0; display: flex; flex-direction: column; }
  .repotop { display: flex; align-items: center; gap: 6px; height: 22px; }
  h3 { font-size: 13px; color: #586069; } h3 a, .about > a { color: #0366d6; }
  .counts { margin-left: auto; display: flex; gap: 8px; font-size: 8px; }
  .count { display: flex; height: 20px; border: 1px solid #d5d8db; border-radius: 4px; background: #fafbfc; box-shadow: 0 1px 0 #1b1f230a; overflow: hidden; }
  .count button { gap: 2px; padding: 0 8px; border-right: 1px solid #d5d8db; } .count a { padding: 0 8px; line-height: 18px; background: #fff; }
  .off button { color: #959da5; }
  .reponav { flex: 1; display: flex; align-items: flex-end; }
  .reponav a { height: 34px; display: flex; align-items: center; gap: 5px; padding: 0 12px; border-bottom: 2px solid transparent; margin-bottom: -1px; }
  .reponav .sel { border-color: #f9826c; padding-left: 11px; }
  .content { display: grid; grid-template-columns: 634fr 196fr; gap: 22px; padding: 22px 23px 0; }
  main { min-width: 0; }
  .flash { height: 40px; display: flex; align-items: center; gap: 3px; padding: 0 8px 0 12px; border: 1px solid #dfd8a8; border-radius: 4px; background: #fffbdd; }
  .flash .green { margin-left: auto; } .flash b { font-weight: 400; }
  .actions { display: flex; gap: 6px; margin: 11px 0 12px; } .grow { flex: 1; }
  .plain { height: 23px; padding: 0 11px; gap: 4px; border: 1px solid #d5d8db; border-radius: 4px; background: #fafbfc; }
  .plain span { color: #586069; }
  .ahead { height: 39px; display: flex; align-items: center; gap: 12px; padding: 0 11px; border: 1px solid #e1e4e8; border-radius: 4px; background: #fafbfc; margin-bottom: 11px; }
  .ahead span { flex: 1; } .ahead a { display: flex; align-items: center; gap: 3px; color: #586069; }
  .files { border: 1px solid #e1e4e8; border-radius: 4px 4px 0 0; }
  .commit { height: 40px; display: flex; align-items: center; gap: 9px; padding: 0 11px 0 9px; background: #f1f8ff; border: 1px solid #c8e1ff; margin: -1px; border-radius: 4px 4px 0 0; color: #586069; }
  .commit b { font-weight: 400; color: #24292e; } .commit code { font: 8px 'Liberation Mono', monospace; }
  .commit a { display: flex; align-items: center; gap: 2px; color: #24292e; margin-left: 3px; }
  .dots { width: 14px; height: 9px; background: #dfe2e5; margin-left: -3px; line-height: 6px; padding-bottom: 3px; }
  .files table { width: 100%; table-layout: fixed; border-collapse: collapse; }
  .files td { height: 26px; padding: 0; border-top: 1px solid #e1e4e8; color: #6a737d; }
  .files tr:first-child td { border-top: 0; }
  .files .ic { width: 34px; padding-left: 11px; } .files .fn { width: 182px; color: #24292e; } .files .age { text-align: right; padding-right: 11px; }
  .about { min-width: 0; padding-top: 2px; font-size: 8px; }
  h4 { font-size: 10px; line-height: 16px; display: flex; justify-content: space-between; align-items: center; }
  .desc { font-size: 10px; line-height: 17px; font-style: italic; color: #586069; margin: 12px 0; padding-right: 22px; }
  .about .readme { display: flex; align-items: center; gap: 9px; color: #586069; font-size: 9px; }
  .ruled { margin-top: 17px; padding-top: 19px; border-top: 1px solid #e1e4e8; }
  .ruled + p { margin-top: 11px; line-height: 13px; }
  .about > a { display: flex; line-height: 13px; }
</style>
